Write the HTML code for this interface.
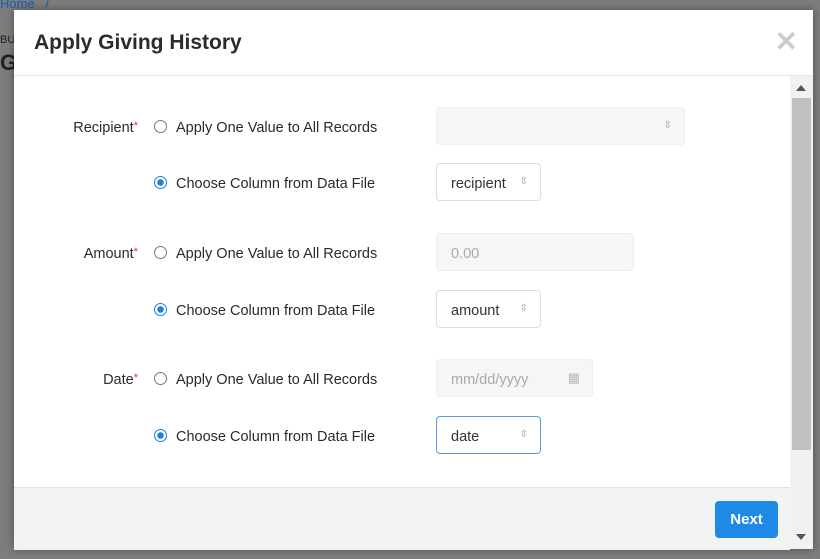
<!DOCTYPE html><html><head><style>
body{margin:0;width:820px;height:559px;overflow:hidden;background:#7d7d7d;font-family:"Liberation Sans",sans-serif;position:relative;color:#333}
.bg{position:absolute;font-size:13px;color:#222}
.m{position:absolute;left:14px;top:10px;width:799px;height:539px;background:#fff;box-shadow:0 0 8px rgba(0,0,0,.4)}
.t{position:absolute;left:20px;top:21px;font-size:21px;font-weight:bold;color:#2b2b2b}
.x{position:absolute;right:15px;top:15px;font-size:28px;color:#ccc;font-weight:bold}
.hr{position:absolute;left:0;right:0;top:65px;border-top:1px solid #e3e3e3}
.sb{position:absolute;left:776px;top:66px;width:23px;height:412px;background:#f1f1f1}
.th{position:absolute;left:778px;top:22px;width:19px;height:352px;background:#c1c1c1}
.ft{position:absolute;left:0;top:477px;width:776px;height:62px;background:#f2f3f5;border-top:1px solid #e3e3e3}
.ft2{position:absolute;left:776px;top:478px;width:23px;height:61px;background:#f1f1f1}
.btn{position:absolute;left:701px;top:491px;width:63px;height:37px;background:#1f8ae6;border-radius:4px;color:#fff;font-weight:bold;font-size:15px;text-align:center;line-height:37px}
.l{position:absolute;width:124px;text-align:right;font-size:14.5px;color:#2a2a2a}
.l i{color:#d33;font-style:normal;font-size:11px;vertical-align:top}
.r{position:absolute;left:140px;font-size:14.5px;color:#2a2a2a}
.r:before{content:"";display:inline-block;width:11px;height:11px;border:1px solid #777;border-radius:50%;margin-right:9px;vertical-align:-1px;background:#fff}
.r.on:before{border-color:#1a7fe0;background:radial-gradient(circle,#1a7fe0 3px,#fff 3.5px)}
.c{position:absolute;left:422px;height:38px;border:1px solid #ddd;border-radius:4px;box-sizing:border-box;font-size:14.5px;line-height:40px;padding-left:14px;color:#333}
.d{background:#f5f6f7;border-color:#eee;color:#aaa}
.ar{position:absolute;right:12px;top:0;font-size:10px;color:#999;line-height:36px}
</style></head><body>
<div class="bg" style="left:0;top:-4px;color:#1a5fb4">Home &nbsp;&nbsp;/</div>
<div class="bg" style="left:0;top:34px;font-size:11px">BU</div>
<div class="bg" style="left:0;top:50px;font-size:22px;font-weight:bold">G</div>
<div class="m">
<div class="t">Apply Giving History</div><div class="x">✕</div>
<div class="hr"></div>
<div class="sb"><div style="position:absolute;left:6px;top:9px;border:5px solid transparent;border-bottom:6px solid #555;border-top:0"></div><div class="th" style="top:22px;left:2px"></div></div>
<div class="l" style="left:0;top:110px">Recipient<i>*</i></div>
<div class="r" style="top:110px">Apply One Value to All Records</div>
<div class="c d" style="top:97px;width:249px"><span class="ar">⇳</span></div>
<div class="r on" style="top:166px">Choose Column from Data File</div>
<div class="c" style="top:153px;width:105px">recipient<span class="ar">⇳</span></div>
<div class="l" style="left:0;top:236px">Amount<i>*</i></div>
<div class="r" style="top:236px">Apply One Value to All Records</div>
<div class="c d" style="top:223px;width:198px">0.00</div>
<div class="r on" style="top:293px">Choose Column from Data File</div>
<div class="c" style="top:280px;width:105px">amount<span class="ar">⇳</span></div>
<div class="l" style="left:0;top:362px">Date<i>*</i></div>
<div class="r" style="top:362px">Apply One Value to All Records</div>
<div class="c d" style="top:349px;width:157px">mm/dd/yyyy<span class="ar" style="font-size:13px;color:#bbb">▦</span></div>
<div class="r on" style="top:419px">Choose Column from Data File</div>
<div class="c" style="top:406px;width:105px;border-color:#5b9de0">date<span class="ar">⇳</span></div>
<div class="ft"></div><div class="ft2"><div style="position:absolute;left:6px;top:46px;border:5px solid transparent;border-top:6px solid #555;border-bottom:0"></div></div>
<div class="btn">Next</div>
</div>
</body></html>
